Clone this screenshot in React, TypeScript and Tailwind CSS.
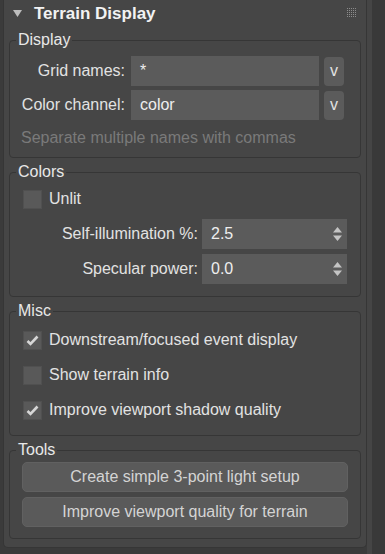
import React from "react"

const font = { fontFamily: '"Liberation Sans", Arial, sans-serif' }

function Grip() {
  const dots = []
  for (let r = 0; r < 5; r++) {
    for (let c = 0; c < 5; c++) {
      dots.push(<rect key={`${r}-${c}`} x={c * 2} y={r * 2} width="1" height="1" fill="#8c8c8c" />)
    }
  }
  return (
    <svg width="10" height="10" viewBox="0 0 10 10">
      {dots}
    </svg>
  )
}

function SpinArrows() {
  return (
    <svg width="9" height="14" viewBox="0 0 9 14">
      <path d="M4.5 0 L9 5.5 L0 5.5 Z" fill="#c4c4c4" />
      <path d="M0 8.5 L9 8.5 L4.5 14 Z" fill="#c4c4c4" />
    </svg>
  )
}

function Checkbox({ checked, label }: { checked?: boolean; label: string }) {
  return (
    <div className="flex items-center h-[20px] gap-[7px]">
      <div className="w-[19px] h-[19px] bg-[#595959] border border-[#505050] flex items-center justify-center">
        {checked && (
          <svg width="13" height="11" viewBox="0 0 13 11">
            <path d="M1.5 6 L4.5 9 L11.5 1.5" stroke="#d6d6d6" strokeWidth="2.6" fill="none" strokeLinejoin="miter" />
          </svg>
        )}
      </div>
      <span className="text-[16px] text-[#e2e2e2] leading-none">{label}</span>
    </div>
  )
}

function Group({ title, className, children }: { title: string; className?: string; children: React.ReactNode }) {
  return (
    <fieldset className={`mx-[5px] border border-[#363636] rounded-[4px] ${className ?? ""}`}>
      <legend className="ml-[6px] px-[2px] text-[16px] leading-[18px] text-[#e8e8e8]">{title}</legend>
      {children}
    </fieldset>
  )
}

export default function App() {
  return (
    <div className="w-[385px] h-[554px] bg-[#3b3b3b] flex" style={font}>
      <div className="ml-[3px] w-[364px] h-[548px] bg-[#464646] border-x border-b border-[#363636] rounded-b-[5px] flex flex-col">
        {/* Title */}
        <div className="h-[31px] flex items-center pl-[9px] pr-[9px] pb-[4px]">
          <svg width="9" height="7" viewBox="0 0 9 7">
            <path d="M0 0 L9 0 L4.5 7 Z" fill="#bdbdbd" />
          </svg>
          <span className="ml-[12px] text-[17px] font-bold text-[#f2f2f2]">Terrain Display</span>
          <div className="ml-auto mb-[2px]">
            <Grip />
          </div>
        </div>

        {/* Display */}
        <Group title="Display" className="pt-[7px] pb-[9px]">
          <div className="flex flex-col gap-[4px]">
            <div className="flex items-center h-[30px]">
              <span className="w-[115px] text-right text-[16px] text-[#e2e2e2]">Grid names:</span>
              <div className="ml-[6px] w-[188px] h-[30px] bg-[#5b5b5b] flex items-center pl-[9px] text-[16px] text-[#eeeeee]">*</div>
              <button className="ml-[5px] w-[20px] h-[29px] bg-[#5b5b5b] rounded-[4px] text-[16px] text-[#e2e2e2] flex items-center justify-center">v</button>
            </div>
            <div className="flex items-center h-[30px]">
              <span className="w-[115px] text-right text-[16px] text-[#e2e2e2]">Color channel:</span>
              <div className="ml-[6px] w-[188px] h-[30px] bg-[#5b5b5b] flex items-center pl-[9px] text-[16px] text-[#eeeeee]">color</div>
              <button className="ml-[5px] w-[20px] h-[29px] bg-[#5b5b5b] rounded-[4px] text-[16px] text-[#e2e2e2] flex items-center justify-center">v</button>
            </div>
          </div>
          <div className="h-[20px] mt-[8px] pl-[11px] flex items-center text-[16px] text-[#7a7a7a]">Separate multiple names with commas</div>
        </Group>

        {/* Colors */}
        <Group title="Colors" className="mt-[5px] pt-[8px] pb-[12px]">
          <div className="pl-[13px]">
            <Checkbox label="Unlit" />
          </div>
          <div className="mt-[10px] flex flex-col gap-[5px]">
            <div className="flex items-center h-[30px]">
              <span className="w-[188px] text-right text-[16px] text-[#e2e2e2]">Self-illumination %:</span>
              <div className="ml-[4px] w-[145px] h-[30px] bg-[#5b5b5b] flex items-center pl-[9px] pr-[5px] text-[16px] text-[#eeeeee]">
                <span>2.5</span>
                <span className="ml-auto flex"><SpinArrows /></span>
              </div>
            </div>
            <div className="flex items-center h-[30px]">
              <span className="w-[188px] text-right text-[16px] text-[#e2e2e2]">Specular power:</span>
              <div className="ml-[4px] w-[145px] h-[30px] bg-[#5b5b5b] flex items-center pl-[9px] pr-[5px] text-[16px] text-[#eeeeee]">
                <span>0.0</span>
                <span className="ml-auto flex"><SpinArrows /></span>
              </div>
            </div>
          </div>
        </Group>

        {/* Misc */}
        <Group title="Misc" className="mt-[5px] pt-[10px] pb-[15px]">
          <div className="pl-[13px] flex flex-col gap-[15px]">
            <Checkbox checked label="Downstream/focused event display" />
            <Checkbox label="Show terrain info" />
            <Checkbox checked label="Improve viewport shadow quality" />
          </div>
        </Group>

        {/* Tools */}
        <Group title="Tools" className="mt-[5px] pt-[3px] pb-[11px]">
          <div className="px-[12px] flex flex-col gap-[5px]">
            <button className="h-[30px] w-full bg-[#5a5a5a] border border-[#616161] rounded-[5px] text-[16px] text-[#d4d4d4]">Create simple 3-point light setup</button>
            <button className="h-[30px] w-full bg-[#5a5a5a] border border-[#616161] rounded-[5px] text-[16px] text-[#d4d4d4]">Improve viewport quality for terrain</button>
          </div>
        </Group>
      </div>
      <div className="w-[5px] h-full bg-[#454545]" />
      <div className="flex-1 h-full bg-[#393939]" />
    </div>
  )
}
